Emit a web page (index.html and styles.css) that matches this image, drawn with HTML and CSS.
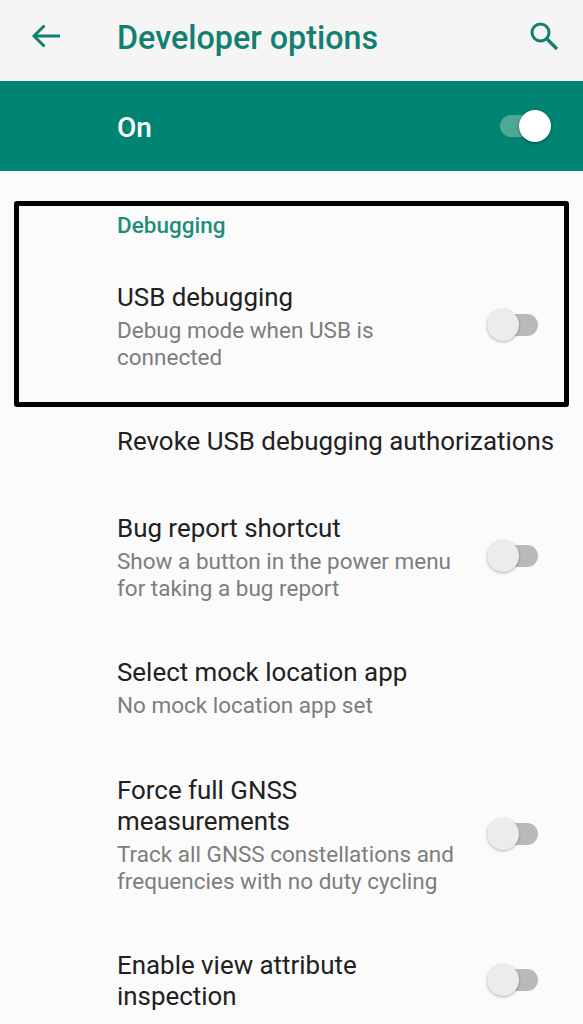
FILE: index.html
```html
<!DOCTYPE html>
<html>
<head>
	<meta charset="UTF-8">
	<title>Developer options</title>
	<link rel="stylesheet" href="styles.css">
</head>
<body>
	<div class="app-bar">
		<svg class="icon-back" width="30" height="26" viewBox="0 0 30 26">
			<path d="M29 13H3M13.500 2.500L3 13l10.500 10.500" fill="none" stroke="#13806f" stroke-width="3"/>
		</svg>
		<h1 class="title">Developer options</h1>
		<svg class="icon-search" width="30" height="30" viewBox="0 0 30 30">
			<circle cx="11.500" cy="11.500" r="8.500" fill="none" stroke="#13806f" stroke-width="3"/>
			<path d="M17.500 17.500L28 28" fill="none" stroke="#13806f" stroke-width="3.400"/>
		</svg>
	</div>
	<div class="master">
		<span class="master-label">On</span>
		<div class="switch on"><span class="track"></span><span class="thumb"></span></div>
	</div>

	<div class="highlight">
		<div class="section-title">Debugging</div>
		<div class="row first">
			<div class="text">
				<div class="row-title">USB debugging</div>
				<div class="row-sub">Debug mode when USB is connected</div>
			</div>
			<div class="switch"><span class="track"></span><span class="thumb"></span></div>
		</div>
	</div>

	<div class="list">
		<div class="row revoke">
			<div class="text wide">
				<div class="row-title">Revoke USB debugging authorizations</div>
			</div>
		</div>
		<div class="row bug">
			<div class="text">
				<div class="row-title">Bug report shortcut</div>
				<div class="row-sub">Show a button in the power menu for taking a bug report</div>
			</div>
			<div class="switch"><span class="track"></span><span class="thumb"></span></div>
		</div>
		<div class="row mock">
			<div class="text wide">
				<div class="row-title">Select mock location app</div>
				<div class="row-sub">No mock location app set</div>
			</div>
		</div>
		<div class="row gnss">
			<div class="text">
				<div class="row-title">Force full GNSS measurements</div>
				<div class="row-sub">Track all GNSS constellations and frequencies with no duty cycling</div>
			</div>
			<div class="switch"><span class="track"></span><span class="thumb"></span></div>
		</div>
		<div class="row attr">
			<div class="text">
				<div class="row-title">Enable view attribute inspection</div>
			</div>
			<div class="switch"><span class="track"></span><span class="thumb"></span></div>
		</div>
	</div>
</body>
</html>
```

FILE: styles.css
```css
html, body {
	margin: 0;
	padding: 0;
}
body {
	width: 583px;
	height: 1024px;
	overflow: hidden;
	background-color: #fbfbfb;
	font-family: Roboto, "Liberation Sans", sans-serif;
}
.app-bar {
	display: flex;
	align-items: center;
	height: 80px;
	background-color: #f5f5f5;
	box-sizing: border-box;
	padding: 0 24px 8px 31px;
}
.icon-back {
	flex: none;
}
.title {
	flex: 1;
	margin: 3px 0 0 56px;
	font-size: 32.300px;
	font-weight: 500;
	color: #13806f;
}
.master {
	display: flex;
	align-items: center;
	justify-content: space-between;
	height: 90px;
	margin-top: 1px;
	padding: 0 31px 0 117px;
	background-color: #018472;
}
.master-label {
	margin-top: 2px;
	font-size: 28px;
	font-weight: 500;
	color: #fff;
}
.switch {
	position: relative;
	width: 53px;
	height: 34px;
	flex: none;
}
.row .switch {
	margin-bottom: 3px;
}
.track {
	position: absolute;
	left: 1px;
	right: 1px;
	top: 6px;
	height: 22px;
	border-radius: 11px;
	background-color: #b9b9b9;
}
.thumb {
	position: absolute;
	left: 1px;
	top: 1px;
	width: 32px;
	height: 32px;
	border-radius: 50%;
	background-color: #ececec;
	box-shadow: 0 1px 3px rgba(0, 0, 0, 0.3);
}
.switch.on .track {
	background-color: #4da896;
}
.switch.on .thumb {
	left: 20px;
	background-color: #fff;
	box-shadow: 0 1px 3px rgba(0, 0, 0, 0.45);
}
.highlight {
	height: 206px;
	box-sizing: border-box;
	margin: 30px 14px 0;
	border: 5px solid #000;
	border-radius: 3px;
	padding-left: 98px;
}
.section-title {
	margin-top: 5px;
	font-size: 22.500px;
	line-height: 28px;
	font-weight: 500;
	color: #1f8d7b;
}
.row {
	display: flex;
	align-items: center;
	justify-content: space-between;
}
.row.first {
	margin-top: 43px;
	padding-right: 25px;
}
.text {
	width: 345px;
}
.text.wide {
	width: auto;
	white-space: nowrap;
}
.row-title {
	font-size: 25.900px;
	line-height: 31px;
	color: #212121;
}
.row-sub {
	margin-top: 4px;
	font-size: 22.500px;
	line-height: 27px;
	color: #7d7d7d;
}
.list {
	padding: 0 44px 0 117px;
}
.revoke {
	margin-top: 19px;
}
.bug {
	margin-top: 56px;
}
.mock {
	margin-top: 55px;
}
.gnss {
	margin-top: 56px;
}
.attr {
	margin-top: 55px;
}
```
